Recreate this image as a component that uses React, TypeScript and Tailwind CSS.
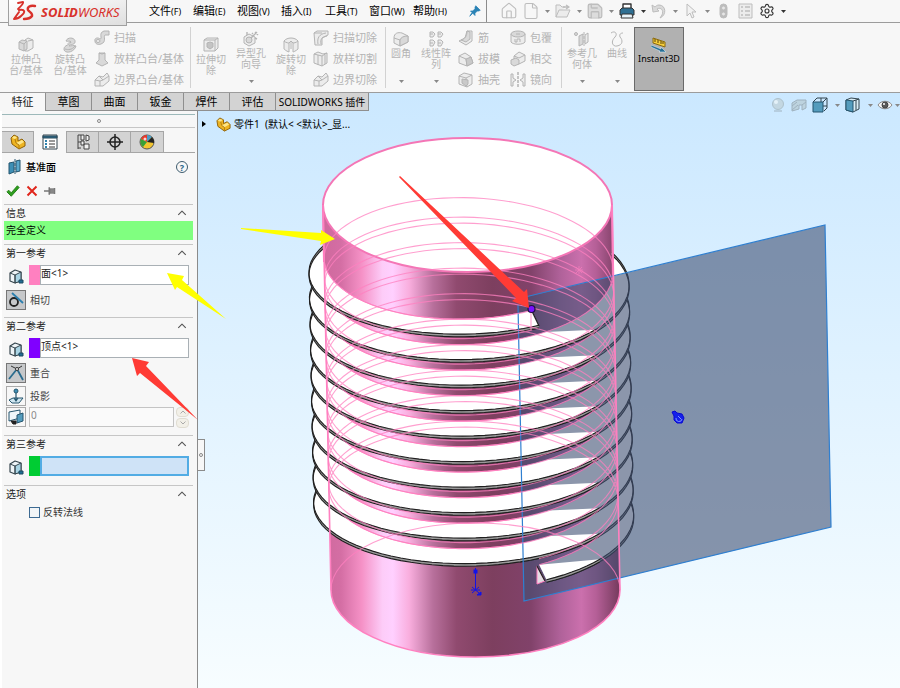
import React from "react";
import { House, File, Save, Settings } from "lucide-react";

/* ---------- geometry of the threaded part ---------- */

const PITCH = 25.5;
const TURNS = 11;

type Edge = { radius: number; depth: number; lift: number };

const crestTop: Edge = { radius: 160, depth: 68, lift: 4 };
const crestBottom: Edge = { radius: 160, depth: 68, lift: 6.6 };
const rootUpper: Edge = { radius: 144.5, depth: 67, lift: -10 };
const rootLower: Edge = { radius: 144.5, depth: 67, lift: 9.5 };

function helix(deg: number, e: Edge): [number, number] {
  const c = 262 + (PITCH * (deg - 90)) / 360 + e.lift;
  const a = (deg * Math.PI) / 180;
  return [468.7 + (c - 262) * 0.02 + e.radius * Math.cos(a), c + e.depth * Math.sin(a)];
}

function run(from: number, to: number, e: Edge): string {
  const n = Math.max(2, Math.ceil(Math.abs(to - from) / 4));
  const out: string[] = [];
  for (let i = 0; i <= n; i++) {
    const [x, y] = helix(from + ((to - from) * i) / n, e);
    out.push(x.toFixed(1) + "," + y.toFixed(1));
  }
  return out.join(" ");
}

const turns = Array.from({ length: TURNS }, (_, i) => {
  const base = i * 360;
  const start = i === 0 ? 64 : base - 27;
  const end = i === TURNS - 1 ? base + 63 : base + 205;
  return { base, start, end, inStart: Math.max(start, base), inEnd: Math.min(end, base + 180) };
});

function Rim({ from, to }: { from: number; to: number }) {
  return (
    <g fill="none" stroke="#1e1e1e" strokeWidth="1.1">
      <polygon points={run(from, to, crestTop) + " " + run(to, from, crestBottom)} fill="#9a9a9a" stroke="none" />
      <polyline points={run(from, to, crestTop)} />
      <polyline points={run(from, to, crestBottom)} />
    </g>
  );
}

function Model() {
  return (
    <svg
      className="absolute inset-0 h-full w-full"
      viewBox="198 111 702 577"
      preserveAspectRatio="xMinYMin meet"
      role="img"
      aria-label="零件1"
    >
      <defs>
        <linearGradient id="body" gradientUnits="userSpaceOnUse" x1="323" y1="0" x2="620" y2="0">
          <stop offset="0" stopColor="#cf699d" />
          <stop offset="0.06" stopColor="#d46ea4" />
          <stop offset="0.13" stopColor="#f591c6" />
          <stop offset="0.2" stopColor="#fdccf8" />
          <stop offset="0.235" stopColor="#ffd0ff" />
          <stop offset="0.29" stopColor="#f9aede" />
          <stop offset="0.37" stopColor="#b8709c" />
          <stop offset="0.45" stopColor="#904a6f" />
          <stop offset="0.57" stopColor="#7d3f5f" />
          <stop offset="0.7" stopColor="#81426a" />
          <stop offset="0.8" stopColor="#b0629a" />
          <stop offset="0.87" stopColor="#cb70ad" />
          <stop offset="0.92" stopColor="#b55f97" />
          <stop offset="1" stopColor="#743a5c" />
        </linearGradient>
      </defs>

      <path d="M323 205 L331 590 A144.5 67 0 0 0 620 590 L612 205 Z" fill="url(#body)" />
      {[...turns].reverse().map((t) => (
        <g key={t.base}>
          <polygon points={run(t.start, t.end, crestTop) + " " + run(t.inEnd, t.inStart, rootUpper)} fill="#fff" />
          <Rim from={t.start} to={t.end} />
          <polyline points={run(t.inStart, t.inEnd, rootUpper)} fill="none" stroke="#ff7fbf" strokeWidth="1" />
        </g>
      ))}
      <path d="M323 205 L324 262 M612 205 L613 284" stroke="#f779b8" strokeWidth="2" />

      <polygon points="518,299 825,225 831,527 524,601" fill="#3f5073" fillOpacity="0.6" />
      {turns.map((t, i) => {
        const low = i === 0 ? 64 : t.base + (i === TURNS - 1 ? 63 : 58);
        const right = i === 0 ? 64 : t.base + 38;
        const left = i === TURNS - 1 ? t.base + 63 : t.base + 73;
        return (
          <g key={t.base}>
            <polygon points={run(left, low, rootUpper) + " " + run(right, left, crestTop)} fill="#fff" />
            <Rim from={right} to={left} />
          </g>
        );
      })}
      <path d="M531 309 L539 326" stroke="#202020" strokeWidth="1.3" />
      <path d="M537 566 L545 581 L537 584 Z" fill="#e4dde4" stroke="#ff7fbf" />
      <path d="M537 566 L545 581" stroke="#202020" strokeWidth="1.3" />
      <path d="M525 297 L825 225 L831 527 L524 601 L518 305" fill="none" stroke="#2f7fd0" strokeWidth="1.2" />

      <ellipse cx="467.5" cy="205" rx="144.5" ry="67" fill="#fff" stroke="#f476b6" strokeWidth="2" />
      <g fill="none" stroke="#ff80c0" strokeWidth="1.1" opacity="0.75">
        <polyline points={run(64, 3663, rootUpper)} />
        <polyline points={run(64, 3303, rootLower)} />
        <path d="M331 590 A144.5 67 0 0 1 620 590" />
        <path d="M531 310 V330" />
      </g>
      <path d="M323 205 L331 590 A144.5 67 0 0 0 620 590 L612 205" fill="none" stroke="#ff80c0" strokeWidth="1.6" />

      <path d="M579 266 v8 M575 270 h8 M576 267 l6 6 M582 267 l-6 6" stroke="#f07cba" strokeWidth="0.8" />
      <g stroke="#1212e8" fill="#1212e8" strokeWidth="1">
        <path d="M475.500 568 V590" />
        <rect x="474" y="570" width="3" height="3" />
        <path d="M472 587 l7 6 M479 587 l-7 6 M471 590 h9" />
        <path d="M477 595 l4 -3 l0 3 Z" />
      </g>
      <path d="M672 412 l3 -1 l2 2 l5 1 l2 4 l-2 5 l-5 0 l-3 -3 l0 -4 Z" fill="#1420ea" stroke="#0808d0" />
      <path d="M676 418 a3 3 0 0 0 6 1 M678 416 l3 3" fill="none" stroke="#7f93ff" />
      <circle cx="531.500" cy="309" r="3.500" fill="#7a10ff" stroke="#201040" strokeWidth="1.200" />
    </svg>
  );
}

/* ---------- icons ---------- */

function Svg({ children, className = "h-4 w-4" }: { children: React.ReactNode; className?: string }) {
  return (
    <svg viewBox="0 0 16 16" className={className} fill="none" stroke="currentColor" strokeWidth="1" strokeLinejoin="round" aria-hidden="true">
      {children}
    </svg>
  );
}

const G = "#d9d9d9";
const L = "#ececec";

const art: Record<string, React.ReactNode> = {
  extrude: (<><path d="M7 3 L10 1 L15 3 V11 L10 14 H7 Z" fill={L} /><path d="M1 5 L4 3 L9 4 V12 L6 14 L1 12 Z" fill={G} /><path d="M1 5 L6 7 L9 4 M6 7 V14 M10 4 L15 3" /></>),
  revolve: (<><path d="M4 4 C6 -1 14 1 13 5 C13 8 8 7 7 9 C9 9 12 8 14 9 C12 16 2 17 2 12 C2 8 8 8 9 5 C8 3 6 5 4 4 Z" fill={G} /><path d="M9 5 C7 5 6 6 6 7 M3 12 C6 13 10 13 13 9" /></>),
  sweep: (<><path d="M1 11 C0 8 4 7 6 9 C9 9 4 3 10 1 H15 V5 H11 C9 6 13 12 7 14 C4 15 1 14 1 11 Z" fill={G} /><ellipse cx="4" cy="11" rx="2" ry="1.500" fill={L} /></>),
  loft: (<><path d="M5 2 L11 2 L11 9 L14 12 L8 15 L2 12 L5 9 Z" fill={G} /><path d="M5 2 l3 1 l3 -1" /></>),
  boundary: (<><path d="M1 8 L5 4 L9 5 L13 1 L15 4 V9 L9 14 L1 14 Z" fill={L} /><path d="M1 8 L6 9 L9 8 L15 4 M6 9 V14 M5 4 L9 8" /></>),
  cut: (<><path d="M1 3 L4 1 H15 V11 L12 14 H1 Z" fill={L} /><path d="M1 3 H12 V14 M12 3 L15 1" /><path d="M4 6 L7 5 L10 6 V10 L7 12 L4 10 Z" fill="#c4c4c4" /></>),
  hole: (<><path d="M1 6 L6 3 L12 6 V12 L6 15 L1 12 Z" fill={L} /><circle cx="6" cy="9" r="3" fill={G} /><path d="M8 7 L14 1 M12 1 l3 3 M4 1 v3 M14 8 l-2 -1 M9 2 l1 1" strokeWidth="1.400" /></>),
  revcut: (<><path d="M1 4 C4 0 12 0 15 4 V12 C13 14 10 15 10 15 V6 L8 4 L6 6 V15 C3 14 1 12 1 12 Z" fill={L} /><path d="M8 4 V12 M1 4 C3 6 6 6 6 6 M10 6 C13 6 15 4 15 4" /></>),
  sweepcut: (<><path d="M1 3 L4 1 H15 V5 L9 8 V15 H2 Z" fill={L} /><path d="M5 14 C4 8 6 4 13 3 M8 14 C7 9 9 7 14 6 M1 3 H9" /></>),
  loftcut: (<><path d="M1 3 L5 1 L10 3 L14 2 V12 L9 15 L1 12 Z" fill={L} /><path d="M5 4 V14 M9 5 V15 M12 4 V13 M1 3 L9 5 L14 2" /></>),
  fillet: (<><path d="M1 7 C1 2 5 1 9 2 L15 5 V11 L7 15 L1 12 Z" fill={L} /><path d="M1 7 L7 9 V15" /><path d="M7 9 C8 6 11 5 15 5 V11 L7 15 Z" fill={G} /></>),
  pattern: (<><path d="M2 1 h3 l2 2 l-2 3 h-3 Z M10 1 h3 l2 2 l-2 3 h-3 Z M2 9 h3 l2 2 l-2 4 h-3 Z M10 9 h3 l2 2 l-2 4 h-3 Z" fill={L} /><path d="M2 3 h3 M10 3 h3 M2 12 h3 M10 12 h3" /></>),
  rib: (<><path d="M9 1 L14 1 V11 L8 15 L1 11 L7 8 Z" fill={L} /><path d="M9 1 C9 6 7 9 3 10 L8 12 L12 9 V2 Z" fill={G} /></>),
  draft: (<><path d="M1 5 L7 2 L13 6 L15 12 L9 15 L1 12 Z" fill={L} /><path d="M1 5 L8 8 L9 15" /><path d="M8 8 L13 6 L15 12 L9 15 Z" fill="#c9c9c9" /></>),
  shell: (<><path d="M1 4 L6 1 L14 3 V12 L9 15 L1 12 Z" fill={L} /><path d="M1 4 L8 6 L9 15 M8 6 L14 3" /><path d="M4 7 L10 8 V12 L8 14 L4 11 Z" fill="#c9c9c9" /></>),
  wrap: (<><path d="M1 4 V12 C3 15 13 15 15 12 V4" fill={L} /><ellipse cx="8" cy="4" rx="7" ry="3" fill={G} /><path d="M5 9 v3 h2 v-3 h3 v3 M6 4 h4" /></>),
  intersect: (<><path d="M4 5 L9 1 L15 4 V10 L9 13 L4 10 Z" fill={L} /><path d="M1 9 L6 7 L9 9 V13 L4 15 L1 13 Z" fill={G} /><path d="M4 5 L9 7 L15 4" /></>),
  mirror: (<><path d="M8 0 V16" strokeDasharray="3 1" strokeWidth="1.500" /><path d="M1 2 H3 V6 L6 8 L3 10 V14 H1 Z M15 2 H13 V6 L10 8 L13 10 V14 H15 Z" fill={L} /></>),
  refgeo: (<><circle cx="2" cy="3" r="1.500" fill={G} /><path d="M5 5 L9 3 V13 L5 15 Z" fill={G} /><path d="M11 4 L14 2 V11 L11 13 Z" fill={L} /><path d="M10 1 V15" strokeDasharray="3 1" /></>),
  curve: (<path d="M2 2 C6 -1 9 3 6 6 C1 11 4 16 8 15 C14 14 14 9 11 6 C10 3 12 2 14 2" />),
};

function Part({ className }: { className?: string }) {
  return (
    <Svg className={className}>
      <path d="M1 4 L4 1 L8 3 V7 L12 5 L15 8 V12 L9 15 L2 10 Z" fill="#eeb422" stroke="#8f620a" />
      <path d="M2 4 L4 2 L7 3 L5 5 Z" fill="#fde68a" stroke="none" />
      <path d="M6 9 L12 6 L14 8 L9 11 Z" fill="#fde68a" stroke="none" />
      <path d="M5 5 L6 9 L9 11 V15" stroke="#b07c10" />
    </Svg>
  );
}

function CubePick() {
  return (
    <Svg className="h-4 w-4">
      <path d="M2 4 L7 1 L13 3 V11 L7 14 L2 12 Z" fill="#eef4f7" stroke="#37474f" strokeWidth="1.200" />
      <path d="M7 6 L13 3 V12 L7 14 Z" fill="#a9d4e4" stroke="#37474f" />
      <path d="M2 4 L7 6 V14" stroke="#37474f" />
      <rect x="11" y="11" width="4" height="3" fill="#1f6d94" stroke="#1f4a60" />
    </Svg>
  );
}

function Caret({ dark = false }: { dark?: boolean }) {
  return (
    <svg viewBox="0 0 5 3" className={dark ? "h-[3px] w-[5px] text-[#333]" : "h-[3px] w-[5px] text-[#888]"} aria-hidden="true">
      <path d="M0 0 H5 L2.500 3 Z" fill="currentColor" />
    </svg>
  );
}

/* ---------- menu bar ---------- */

const menus = [
  ["文件", "(F)"], ["编辑", "(E)"], ["视图", "(V)"], ["插入", "(I)"],
  ["工具", "(T)"], ["窗口", "(W)"], ["帮助", "(H)"],
];

function Tool({ label, arrow = false, dark = false, children }: { label: string; arrow?: boolean; dark?: boolean; children: React.ReactNode }) {
  return (
    <>
      <button type="button" aria-label={label} className={dark ? "flex w-[22px] justify-center text-[#333]" : "flex w-[22px] justify-center text-[#bdbdbd]"}>
        {children}
      </button>
      {arrow && (
        <button type="button" aria-label={label + "选项"} className="flex w-[10px] justify-center">
          <Caret dark={dark} />
        </button>
      )}
    </>
  );
}

function MenuBar() {
  return (
    <header className="relative z-20 flex h-[23px] border-b border-[#9c9c9c] bg-[#f7f7f7]">
      <div className="ml-2 flex h-[26px] w-[119px] shrink-0 items-center gap-1 border border-t-0 border-[#a0a0a0] bg-gradient-to-br from-white to-[#dfdfdf] pl-1">
        <svg viewBox="0 0 24 24" className="h-6 w-6 shrink-0" fill="none" stroke="#d8312b" strokeLinecap="round" strokeLinejoin="round" aria-hidden="true">
          <path d="M5 2 L10 1 C11 2 8 5 5 8" strokeWidth="1.800" />
          <path d="M6 9 C12 8 13 11 8 15 C6 17 4 18 1 18 L6 11" strokeWidth="2" />
          <path d="M22 5 C17 4 14 6 15 9 C16 11 20 12 19 15 C17 18 14 18 11 18" strokeWidth="2.400" />
        </svg>
        <span className="text-[13px] leading-none text-[#d8312b] italic">
          <b>SOLID</b>WORKS
        </span>
      </div>
      <nav className="flex w-[360px] shrink-0 items-center border-r border-[#8c8c8c] pl-[22px]">
        {menus.map(([name, key]) => (
          <button key={name} type="button" className="flex w-11 shrink-0 items-baseline text-[11px] leading-5 text-black">
            {name}<span className="text-[9px]">{key}</span>
          </button>
        ))}
        <button type="button" aria-label="固定菜单" className="ml-3 text-[#2b83b5]">
          <Svg className="h-3 w-3">
            <path d="M9 1 L15 7 L13 8 L11 8 L8 11 L8 14 L5 11 L1 15 L4 10 L2 8 L5 8 L8 5 L8 3 Z" fill="currentColor" />
          </Svg>
        </button>
      </nav>
      <div className="flex items-center pl-[11px]">
        <Tool label="主页"><House className="h-[18px] w-[18px]" strokeWidth={1.5} /></Tool>
        <Tool label="新建" arrow><File className="h-[18px] w-[18px]" strokeWidth={1.5} /></Tool>
        <Tool label="打开" arrow>
          <Svg><path d="M1 14 V2 H5 L7 4 H10 M1 14 L4 7 H15 L12 14 Z" fill={L} /><path d="M8 4 H13 M11 2 L14 4 L11 6" strokeWidth="1.400" /></Svg>
        </Tool>
        <Tool label="保存" arrow><Save className="h-[18px] w-[18px] fill-[#dcdcdc]" strokeWidth={1.7} /></Tool>
        <Tool label="打印" arrow dark>
          <Svg>
            <path d="M4 1 H12 V6 H4 Z" fill="#fff" strokeWidth="1.400" />
            <path d="M1 7 L3 5 H13 L15 7 V12 H1 Z" fill="#2f6f92" />
            <path d="M3 11 H13 L14 15 H2 Z" fill="#e8f4fa" />
          </Svg>
        </Tool>
        <Tool label="撤消" arrow>
          <Svg><path d="M1 2 L2 9 L8 8 L6 6 C10 4 13 7 11 12 L9 15 C16 12 15 2 8 2 C6 2 5 3 4 4 Z" fill="#dadada" /></Svg>
        </Tool>
        <Tool label="选择" arrow>
          <Svg><path d="M4 1 L4 13 L7 10 L9 15 L11 14 L9 9 L13 9 Z" fill="#f2f2f2" /></Svg>
        </Tool>
        <Tool label="重建模型">
          <Svg><rect x="5" y="1" width="7" height="14" rx="3.500" fill="#bcbcbc" /><circle cx="8.500" cy="5" r="2" fill="#e6e6e6" /><circle cx="8.500" cy="11" r="2" fill="#e6e6e6" /></Svg>
        </Tool>
        <Tool label="文件属性">
          <Svg><rect x="2" y="1" width="13" height="14" fill={L} /><path d="M4 4 h2 M4 8 h2 M4 12 h2 M8 4 h5 M8 8 h5 M8 12 h5" strokeWidth="1.600" /></Svg>
        </Tool>
        <Tool label="选项" arrow dark><Settings className="h-4 w-4" strokeWidth={1.7} /></Tool>
      </div>
    </header>
  );
}

/* ---------- ribbon ---------- */

function Big({ icon, lines, width, drop = false, deep = false }: { icon: string; lines: string[]; width: string; drop?: boolean; deep?: boolean }) {
  return (
    <button type="button" className={"flex h-full shrink-0 flex-col items-center text-[10px] leading-[11px] " + width + (deep ? " pt-[14px]" : " pt-2")}>
      <Svg className="mb-px h-4 w-4">{art[icon]}</Svg>
      {lines.map((l) => (<span key={l} className="whitespace-nowrap">{l}</span>))}
      {drop && <span className="mt-auto mb-[9px]"><Caret /></span>}
    </button>
  );
}

function List({ items, width }: { items: [string, string][]; width: string }) {
  return (
    <div className={"flex shrink-0 flex-col gap-[5px] pt-[7px] pl-[2px] " + width}>
      {items.map(([icon, label]) => (
        <button key={label} type="button" className="flex h-4 items-center gap-1 text-[11px] leading-4 whitespace-nowrap">
          <Svg className="h-4 w-4 shrink-0">{art[icon]}</Svg>
          {label}
        </button>
      ))}
    </div>
  );
}

const Rule = () => <div className="my-1 w-px shrink-0 bg-[#d2d2d2]" />;

function Ribbon() {
  return (
    <div className="flex h-[70px] border-b border-[#9c9c9c] bg-[#f7f7f7] pl-1 text-[#b4b4b4]">
      <Big icon="extrude" lines={["拉伸凸", "台/基体"]} width="w-11" deep />
      <Big icon="revolve" lines={["旋转凸", "台/基体"]} width="w-11" deep />
      <List width="w-[98px]" items={[["sweep", "扫描"], ["loft", "放样凸台/基体"], ["boundary", "边界凸台/基体"]]} />
      <Rule />
      <Big icon="cut" lines={["拉伸切", "除"]} width="w-10" deep />
      <Big icon="hole" lines={["异型孔", "向导"]} width="w-10" drop />
      <Big icon="revcut" lines={["旋转切", "除"]} width="w-10" deep />
      <List width="w-[74px]" items={[["sweepcut", "扫描切除"], ["loftcut", "放样切割"], ["boundary", "边界切除"]]} />
      <Rule />
      <Big icon="fillet" lines={["圆角"]} width="w-[30px]" drop />
      <Big icon="pattern" lines={["线性阵", "列"]} width="w-10" drop />
      <List width="w-[52px]" items={[["rib", "筋"], ["draft", "拔模"], ["shell", "抽壳"]]} />
      <List width="w-[53px]" items={[["wrap", "包覆"], ["intersect", "相交"], ["mirror", "镜向"]]} />
      <Rule />
      <Big icon="refgeo" lines={["参考几", "何体"]} width="w-10" drop />
      <Big icon="curve" lines={["曲线"]} width="w-[30px]" drop />
      <button type="button" aria-pressed="true" className="mt-1 mb-px ml-[2px] flex w-[50px] shrink-0 flex-col items-center border border-[#6a6a6a] bg-[#b1b1b1] pt-[9px] text-[9px] leading-3 text-black">
        <Svg className="h-4 w-4">
          <path d="M2 1 L14 5 V10 L2 6 Z" fill="#f6cf3c" stroke="#8a6a10" />
          <path d="M4 2 v3 M7 3 v3 M10 4 v3 M12 5 v2" stroke="#5a4408" />
          <path d="M0 8 L10 12 L10 10 L15 15 L8 15 L9 14 L0 10 Z" fill="#256f98" stroke="#e8f4fa" strokeWidth="0.500" />
        </Svg>
        Instant3D
      </button>
    </div>
  );
}

const tabs = ["草图", "曲面", "钣金", "焊件", "评估"];

function TabRow() {
  return (
    <div className="relative z-10 flex h-[18px] text-[11px] leading-4">
      <button type="button" className="w-[45px] shrink-0 bg-[#f7f7f7] text-[#222]">特征</button>
      {tabs.map((t) => (
        <button key={t} type="button" className="w-[46px] shrink-0 border-b border-l border-[#8f8f8f] bg-[#d3d3d3] text-black">{t}</button>
      ))}
      <button type="button" className="w-[94px] shrink-0 border-x border-b border-[#8f8f8f] bg-[#d3d3d3] text-[10px] whitespace-nowrap text-black">SOLIDWORKS 插件</button>
      <div className="ml-auto flex h-6 shrink-0 items-center text-[#9fb2bf]">
        <button type="button" aria-label="放大" className="w-[21px]">
          <Svg><circle cx="8" cy="7" r="5.500" fill="#c3d7e2" stroke="#adc1cc" /><circle cx="6" cy="5" r="2" fill="#e4f1f8" stroke="none" /><path d="M4 14 h8" /></Svg>
        </button>
        <button type="button" aria-label="剖面视图" className="w-[21px]">
          <Svg><path d="M1 6 L6 3 H15 V11 L11 13 V8 L8 8 V12 L1 14 Z" fill="#bdd3df" /><path d="M1 9 l5 -4 M1 13 l6 -5 M11 8 L15 5" /></Svg>
        </button>
        <button type="button" aria-label="视图定向" className="w-[18px]">
          <Svg><path d="M5 1 H15 V11 L12 14 M5 1 L1 5 M15 1 L11 5 M9 1 V5 M11 9 H15" stroke="#33454f" /><rect x="1" y="5" width="10" height="10" fill="#549cbd" stroke="#24556e" /></Svg>
        </button>
        <span className="flex w-[15px] justify-center"><Caret /></span>
        <button type="button" aria-label="显示样式" className="w-[18px]">
          <Svg><path d="M1 3 L6 1 L14 2 V12 L8 15 L1 13 Z" fill="#d9edf6" stroke="#33454f" /><path d="M1 3 L8 4 V15 L1 13 Z" fill="#549cbd" stroke="#24556e" /><path d="M8 4 L14 2 M11 3 V13" stroke="#33454f" /></Svg>
        </button>
        <span className="flex w-[14px] justify-center"><Caret /></span>
        <button type="button" aria-label="隐藏项目" className="w-[18px]">
          <Svg><path d="M1 8 C4 3 12 3 15 8 C12 13 4 13 1 8 Z" fill="#f4f4f4" stroke="#8a8a8a" /><circle cx="8" cy="8" r="3" fill="#5a5a5a" stroke="#444" /><circle cx="7" cy="7" r="1" fill="#fff" stroke="none" /></Svg>
        </button>
        <span className="flex w-[5px] justify-end overflow-hidden"><Caret /></span>
      </div>
    </div>
  );
}

/* ---------- property panel ---------- */

function Section({ title, children }: { title: string; children: React.ReactNode }) {
  return (
    <section className="mr-1 ml-[2px] border-t border-[#c6c6c6]">
      <button type="button" className="flex h-4 w-full items-center justify-between pr-[6px] pl-[2px] text-[#222]">
        <span>{title}</span>
        <Svg className="h-[10px] w-[10px]"><path d="M2 11 L8 5 L14 11" strokeWidth="1.800" stroke="#555" /></Svg>
      </button>
      {children}
    </section>
  );
}

function Pick({ label, value, swatch, active = false }: { label: string; value: string; swatch: string; active?: boolean }) {
  return (
    <label className="mt-1 mr-1 flex h-5 items-stretch">
      <span className="flex w-[25px] shrink-0 items-center pt-1 pl-1"><CubePick /></span>
      <span className={"w-[11px] shrink-0 " + swatch} />
      <input
        aria-label={label}
        defaultValue={value}
        className={
          active
            ? "w-0 min-w-0 flex-1 border-2 border-[#52ace4] bg-[#cfe3f7] px-px outline-none"
            : "w-0 min-w-0 flex-1 border border-[#a9b0b5] bg-white pb-1 text-[#222] outline-none"
        }
      />
    </label>
  );
}

function Relation({ label, pressed = false, children }: { label: string; pressed?: boolean; children: React.ReactNode }) {
  return (
    <button type="button" aria-pressed={pressed} className="ml-[2px] flex h-[23px] items-center gap-1 text-[#444]">
      <span className={pressed ? "flex h-5 w-5 items-center justify-center border border-[#777] bg-[#c6c8ca]" : "flex h-5 w-5 items-center justify-center border border-[#aaa] bg-[#f7f7f7]"}>{children}</span>
      {label}
    </button>
  );
}

function Panel() {
  return (
    <aside className="relative z-10 flex w-[198px] shrink-0 flex-col border-r border-l-2 border-r-[#8b8b8b] border-l-white bg-[#f7f7f7] text-[10px] leading-4">
      <div className="mt-[3px] mr-[2px] flex h-[14px] items-center justify-center border-t border-b border-t-[#9db9ba] border-b-[#c6c6c6]">
        <span className="h-1 w-1 rounded-full border border-[#888]" />
      </div>
      <div className="mr-[2px] flex h-[25px] items-stretch border-b border-[#a6a6a6] pt-[3px]">
        <button type="button" aria-label="特征树" className="flex w-8 items-center justify-center border border-b-0 border-l-0 border-[#a6a6a6] bg-[#d3d3d3]"><Part className="h-4 w-4" /></button>
        <button type="button" aria-label="属性" className="-mb-px flex w-8 items-center justify-center bg-[#f7f7f7]">
          <Svg><rect x="1" y="1" width="14" height="14" fill="#fff" stroke="#33454f" /><path d="M1 2 H15 V4 H1 Z" fill="#2b6c8e" stroke="#2b4a5a" /><path d="M3 7 h2 M3 10 h2 M3 13 h2" stroke="#2f83ad" strokeWidth="2" /><path d="M7 7 h6 M7 10 h6 M7 13 h6" stroke="#333" /></Svg>
        </button>
        <button type="button" aria-label="配置" className="flex w-[33px] items-center justify-center border border-b-0 border-[#a6a6a6] bg-[#d3d3d3] text-[#444]">
          <Svg><path d="M3 1 V15 M3 1 H6 M3 14 H6 M3 8 H6" /><path d="M6 1 H9 V6 H6 Z M6 7 H9 V11 H6 Z M9 10 H14 V15 H9 Z M11 1 L14 2 V6 L11 7 Z" fill="#f1f1f1" /></Svg>
        </button>
        <button type="button" aria-label="尺寸专家" className="flex w-8 items-center justify-center border border-b-0 border-l-0 border-[#a6a6a6] bg-[#d3d3d3] text-[#222]">
          <Svg><circle cx="8" cy="8" r="5" strokeWidth="1.500" /><path d="M8 0 V16 M0 8 H16" strokeWidth="1.500" /></Svg>
        </button>
        <button type="button" aria-label="外观" className="flex w-[33px] items-center justify-center border border-b-0 border-l-0 border-[#a6a6a6] bg-[#d3d3d3]">
          <Svg>
            <circle cx="8" cy="8" r="7" fill="#f2c530" stroke="#555" />
            <path d="M8 8 L2 5 A7 7 0 0 1 8 1 Z" fill="#e8382c" stroke="none" />
            <path d="M8 8 L8 1 A7 7 0 0 1 13 3 Z" fill="#4a9cc6" stroke="none" />
            <path d="M8 8 L13 3 A7 7 0 0 1 15 9 Z" fill="#222" stroke="none" />
            <path d="M8 8 L2 5 A7 7 0 0 0 4 13 Z" fill="#38a038" stroke="none" />
            <circle cx="6" cy="5" r="1.500" fill="#fff" stroke="none" opacity="0.800" />
          </Svg>
        </button>
      </div>
      <div className="mt-1 flex h-5 items-center pr-[9px] pl-[5px]">
        <Svg className="h-4 w-4"><path d="M2 4 L7 3 V13 L2 15 Z" fill="#3e8fb5" stroke="#24556e" /><path d="M9 2 L13 1 V12 L9 13 Z" fill="#5ba9cc" stroke="#24556e" /><path d="M8 0 V16" stroke="#24556e" strokeDasharray="3 1" /></Svg>
        <h1 className="ml-[3px] font-medium text-black">基准面</h1>
        <button type="button" aria-label="帮助" className="ml-auto flex h-3 w-3 items-center justify-center rounded-full border border-[#3e5c6e] text-[9px] leading-none font-bold text-[#2c668a]">?</button>
      </div>
      <div className="mt-1 flex h-5 items-center gap-[6px] pl-1">
        <button type="button" aria-label="确定"><Svg className="h-[14px] w-[14px]"><path d="M1 9 L3 7 L6 10 L13 2 L15 4 L6 14 Z" fill="#2e9e1e" stroke="#1c7a10" /></Svg></button>
        <button type="button" aria-label="取消"><Svg className="h-3 w-3"><path d="M2 2 L14 14 M14 2 L2 14" stroke="#e0261c" strokeWidth="2.600" /></Svg></button>
        <button type="button" aria-label="保持可见"><Svg className="h-3 w-3"><path d="M0 8 H7 M7 3 V13 M14 4 V12" stroke="#777" strokeWidth="2" /><rect x="8" y="5" width="6" height="6" fill="#888" stroke="#777" /></Svg></button>
      </div>
      <div className="h-[3px]" />
      <Section title="信息">
        <p className="mb-1 h-[19px] bg-[#80ff80] pl-[2px] leading-[19px] text-black">完全定义</p>
      </Section>
      <Section title="第一参考">
        <Pick label="第一参考实体" value="面<1>" swatch="bg-[#ff80c0]" />
        <div className="mt-[3px] mb-[6px]">
          <Relation label="相切" pressed>
            <Svg><circle cx="6" cy="10" r="4" stroke="#222" strokeWidth="1.800" /><path d="M4 1 L15 11" stroke="#2b7fae" strokeWidth="1.800" /></Svg>
          </Relation>
        </div>
      </Section>
      <Section title="第二参考">
        <Pick label="第二参考实体" value="顶点<1>" swatch="bg-[#8000ff]" />
        <div className="mt-[3px]">
          <Relation label="重合" pressed>
            <Svg><path d="M1 14 L9 4 L15 15" stroke="#2b6c8e" strokeWidth="1.800" /><path d="M3 1 L9 4 M9 4 L14 1" stroke="#333" /><circle cx="9" cy="4" r="1.500" fill="#fff" stroke="#333" /></Svg>
          </Relation>
          <Relation label="投影">
            <Svg><path d="M1 12 L5 10 H15 L11 15 H4 Z" fill="#cfe6f0" stroke="#24556e" /><circle cx="8" cy="3" r="2" fill="#3e8fb5" stroke="#24556e" /><path d="M8 5 V12 M6 10 L8 13 L10 10" stroke="#24556e" strokeWidth="1.200" /></Svg>
          </Relation>
        </div>
        <label className="mr-1 mb-2 ml-[2px] flex h-5 items-stretch">
          <span className="flex w-5 shrink-0 items-center justify-center border border-[#aaa]">
            <Svg><path d="M1 3 L12 1 V9 L1 12 Z" fill="#eef6fa" stroke="#24556e" /><path d="M9 6 L15 4 V12 L9 14 Z" fill="#549cbd" stroke="#24556e" /><path d="M3 12 H8 V15 H5 Z" fill="#222" stroke="#222" /></Svg>
          </span>
          <input aria-label="偏移距离" defaultValue="0" disabled className="ml-[3px] w-0 min-w-0 flex-1 border border-[#c4c4c4] bg-[#fafafa] px-px pb-1 text-[#8a8a8a]" />
          <span className="ml-[2px] flex w-[13px] shrink-0 flex-col gap-px">
            <button type="button" disabled aria-label="增加" className="flex flex-1 items-center justify-center rounded-sm border border-[#e0ddd2] bg-[#f2f0e8]"><Svg className="h-2 w-2"><path d="M3 11 L8 6 L13 11" stroke="#aaa" strokeWidth="2" /></Svg></button>
            <button type="button" disabled aria-label="减少" className="flex flex-1 items-center justify-center rounded-sm border border-[#e0ddd2] bg-[#f2f0e8]"><Svg className="h-2 w-2"><path d="M3 5 L8 10 L13 5" stroke="#aaa" strokeWidth="2" /></Svg></button>
          </span>
        </label>
      </Section>
      <Section title="第三参考">
        <Pick label="第三参考实体" value="" swatch="bg-[#00cc33]" active />
        <div className="h-[9px]" />
      </Section>
      <Section title="选项">
        <label className="mt-[2px] ml-[25px] flex h-4 items-center gap-[3px] text-[#333]">
          <input type="checkbox" className="h-[11px] w-[11px] appearance-none border border-[#3d6a92] bg-[#f2f5f7]" />
          反转法线
        </label>
      </Section>
      <button type="button" aria-label="折叠面板" className="absolute top-[328px] -right-2 flex h-8 w-[7px] items-center justify-center border border-l-0 border-[#8b8b8b] bg-[#f7f7f7]">
        <span className="h-1 w-1 rounded-full border border-[#888]" />
      </button>
    </aside>
  );
}

/* ---------- callout arrows drawn over panel and canvas ---------- */

function Callouts() {
  return (
    <svg className="pointer-events-none absolute inset-0 z-20 h-full w-full" viewBox="0 111 900 577" preserveAspectRatio="xMinYMin meet" aria-hidden="true">
      <g fill="#ffff00">
        <path d="M241 228 L321 233 L321 230 L335 239 L320 245 L321 241 L241 229 Z" />
        <path d="M167 273 L184 276 L182 280 L226 319 L177 287 L175 290 Z" />
      </g>
      <g fill="#ff3b35">
        <path d="M400 176 L524 292 L527 289 L529 308 L512 301 L516 298 L399 177 Z" />
        <path d="M132 358 L149 362 L146 366 L198 420 L140 373 L137 376 Z" />
      </g>
    </svg>
  );
}

export default function App() {
  return (
    <div className="flex min-h-screen flex-col overflow-hidden bg-[#f7f7f7] font-['Noto_Sans','Noto_Sans_CJK_SC',sans-serif]">
      <MenuBar />
      <Ribbon />
      <main className="flex flex-1 flex-col bg-gradient-to-b from-[#cbe8ff] to-[#f7fdff]">
        <TabRow />
        <div className="relative flex flex-1">
          <Panel />
          <div className="relative min-w-0 flex-1">
            <Model />
            <div className="absolute top-1 left-1 flex h-[18px] items-center text-[10px] whitespace-nowrap text-black">
              <svg viewBox="0 0 4 6" className="h-[6px] w-1" aria-hidden="true"><path d="M0 0 L4 3 L0 6 Z" /></svg>
              <span className="mr-[3px] ml-[10px]"><Part className="h-[15px] w-[15px]" /></span>
              <button type="button" className="whitespace-pre">零件1  (默认&lt; &lt;默认&gt;_显...</button>
            </div>
          </div>
          <Callouts />
        </div>
      </main>
    </div>
  );
}
